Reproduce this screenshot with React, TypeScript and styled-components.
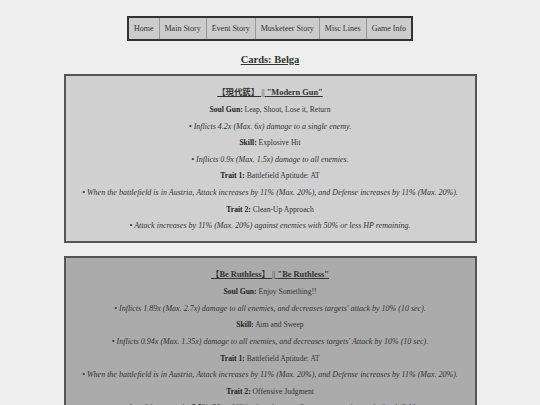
import { Fragment } from "react";
import { createGlobalStyle, styled } from "styled-components";

const GlobalStyle = createGlobalStyle`
  html, body {
    margin: 0;
    padding: 0;
    background-color: #eeeeee;
    color: #333333;
    font-family: "Liberation Serif", "Noto Sans CJK JP", serif;
  }
`;

const Page = styled.div`
  display: flex;
  flex-direction: column;
  align-items: center;
  padding-top: 16px;
`;

const Nav = styled.nav`
  display: flex;
  border: 2px solid #333333;
  background-color: #cccccc;
`;

const NavItem = styled.a`
  display: block;
  padding: 0 5px;
  line-height: 21px;
  font-size: 8px;
  color: #333333;
  text-decoration: none;
  border-right: 1px solid #999999;

  &:last-child {
    border-right: none;
  }
`;

const Heading = styled.h2`
  margin: 13px 0 8px;
  font-size: 10.5px;
  line-height: 12px;
  text-decoration: underline;
  color: #333333;
`;

const Card = styled.section<{ $shade: string }>`
  box-sizing: border-box;
  width: 413px;
  margin-bottom: 13px;
  padding: 12px 8px 11px;
  border: 2px solid #555555;
  background-color: ${(p) => p.$shade};
  text-align: center;
`;

const CardTitle = styled.h3`
  margin: 0 0 7px;
  font-size: 8.4px;
  line-height: 10px;
  text-decoration: underline;
`;

const Sep = styled.span`
  font-weight: normal;
`;

const Line = styled.p`
  margin: 0 0 7.6px;
  font-size: 7.6px;
  line-height: 9px;

  &:last-child {
    margin-bottom: 0;
  }
`;

const Label = styled.b`
  color: #222222;
`;

const Effect = styled(Line)`
  font-style: italic;
  font-size: 8px;
`;

type Entry = { label: string; value: string; effect: string };

type CardData = {
  jp: string;
  en: string;
  shade: string;
  entries: Entry[];
};

const cards: CardData[] = [
  {
    jp: "【現代銃】",
    en: "\"Modern Gun\"",
    shade: "#d0d0d0",
    entries: [
      {
        label: "Soul Gun:",
        value: "Leap, Shoot, Lose it, Return",
        effect: "• Inflicts 4.2x (Max. 6x) damage to a single enemy.",
      },
      {
        label: "Skill:",
        value: "Explosive Hit",
        effect: "• Inflicts 0.9x (Max. 1.5x) damage to all enemies.",
      },
      {
        label: "Trait 1:",
        value: "Battlefield Aptitude: AT",
        effect:
          "• When the battlefield is in Austria, Attack increases by 11% (Max. 20%), and Defense increases by 11% (Max. 20%).",
      },
      {
        label: "Trait 2:",
        value: "Clean-Up Approach",
        effect:
          "• Attack increases by 11% (Max. 20%) against enemies with 50% or less HP remaining.",
      },
    ],
  },
  {
    jp: "【Be Ruthless】",
    en: "\"Be Ruthless\"",
    shade: "#ababab",
    entries: [
      {
        label: "Soul Gun:",
        value: "Enjoy Something!!",
        effect:
          "• Inflicts 1.89x (Max. 2.7x) damage to all enemies, and decreases targets' attack by 10% (10 sec).",
      },
      {
        label: "Skill:",
        value: "Aim and Sweep",
        effect:
          "• Inflicts 0.94x (Max. 1.35x) damage to all enemies, and decreases targets' Attack by 10% (10 sec).",
      },
      {
        label: "Trait 1:",
        value: "Battlefield Aptitude: AT",
        effect:
          "• When the battlefield is in Austria, Attack increases by 11% (Max. 20%), and Defense increases by 11% (Max. 20%).",
      },
      {
        label: "Trait 2:",
        value: "Offensive Judgment",
        effect:
          "• Attack increases by 5.5% (Max. 10%) when there are 3 or more enemies on the battlefield.",
      },
    ],
  },
];

const navLinks = ["Home", "Main Story", "Event Story", "Musketeer Story", "Misc Lines", "Game Info"];

export default function App() {
  return (
    <>
      <GlobalStyle />
      <Page>
        <Nav>
          {navLinks.map((l) => (
            <NavItem key={l} href="#">
              {l}
            </NavItem>
          ))}
        </Nav>
        <Heading>Cards: Belga</Heading>
        {cards.map((c) => (
          <Card key={c.en} $shade={c.shade}>
            <CardTitle>
              {c.jp} <Sep>||</Sep> {c.en}
            </CardTitle>
            {c.entries.map((e) => (
              <Fragment key={e.label}>
                <Line>
                  <Label>{e.label}</Label> {e.value}
                </Line>
                <Effect>{e.effect}</Effect>
              </Fragment>
            ))}
          </Card>
        ))}
      </Page>
    </>
  );
}
